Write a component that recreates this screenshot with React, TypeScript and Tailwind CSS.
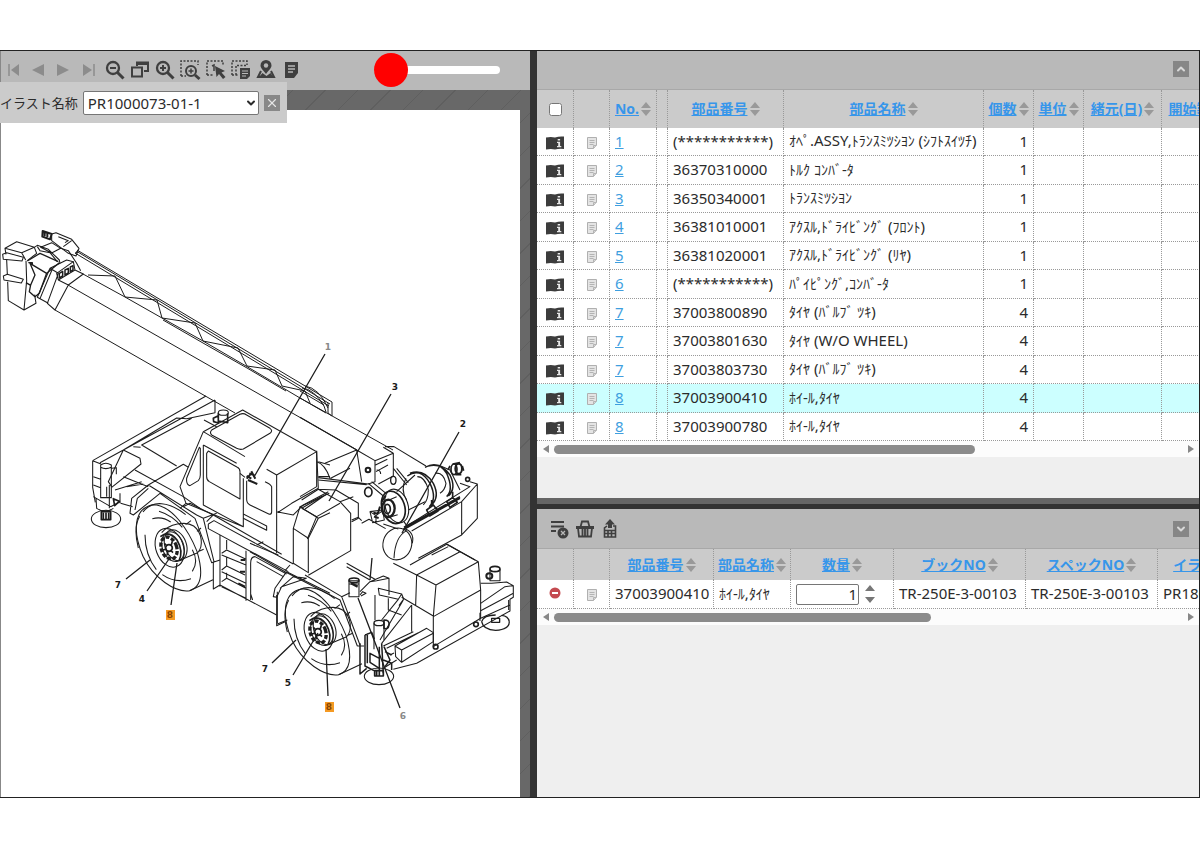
import React from 'react';
import { ChevronDown, ChevronUp, X } from 'lucide-react';

type Part = { no: string; code: string; name: string; qty: number; selected?: boolean };

const parts: Part[] = [
  { no: '1', code: '(***********)', name: 'ｵﾍﾟ.ASSY,ﾄﾗﾝｽﾐﾂｼﾖﾝ (ｼﾌﾄｽｲﾂﾁ)', qty: 1 },
  { no: '2', code: '36370310000', name: 'ﾄﾙｸ ｺﾝﾊﾞ-ﾀ', qty: 1 },
  { no: '3', code: '36350340001', name: 'ﾄﾗﾝｽﾐﾂｼﾖﾝ', qty: 1 },
  { no: '4', code: '36381010001', name: 'ｱｸｽﾙ,ﾄﾞﾗｲﾋﾞﾝｸﾞ (ﾌﾛﾝﾄ)', qty: 1 },
  { no: '5', code: '36381020001', name: 'ｱｸｽﾙ,ﾄﾞﾗｲﾋﾞﾝｸﾞ (ﾘﾔ)', qty: 1 },
  { no: '6', code: '(***********)', name: 'ﾊﾟｲﾋﾟﾝｸﾞ,ｺﾝﾊﾞ-ﾀ', qty: 1 },
  { no: '7', code: '37003800890', name: 'ﾀｲﾔ (ﾊﾞﾙﾌﾞ ﾂｷ)', qty: 4 },
  { no: '7', code: '37003801630', name: 'ﾀｲﾔ (W/O WHEEL)', qty: 4 },
  { no: '7', code: '37003803730', name: 'ﾀｲﾔ (ﾊﾞﾙﾌﾞ ﾂｷ)', qty: 4 },
  { no: '8', code: '37003900410', name: 'ﾎｲ-ﾙ,ﾀｲﾔ', qty: 4, selected: true },
  { no: '8', code: '37003900780', name: 'ﾎｲ-ﾙ,ﾀｲﾔ', qty: 4 },
];

/* Half-width kana are set smaller than the Latin letters beside them. */
function KanaText({ text }: { text: string }) {
  return (
    <>
      {text.split(/([\uff66-\uff9f]+)/).map((run, i) =>
        i % 2 ? (
          <span key={i} className="text-sm">{run}</span>
        ) : (
          run
        ),
      )}
    </>
  );
}

function SortMark() {
  return (
    <svg width="10" height="16" viewBox="0 0 10 16" className="shrink-0 fill-[#999]" aria-hidden="true">
      <path d="M5 1 10 7H0zM5 15 0 9h10z" />
    </svg>
  );
}

function SortHeader({ label }: { label: string }) {
  return (
    <div className="flex items-center justify-center gap-0.5 whitespace-nowrap">
      <a href="#sort" className="text-sm font-bold text-[#3796ea] underline">{label}</a>
      <SortMark />
    </div>
  );
}

function BookIcon() {
  return (
    <svg width="18" height="14" viewBox="0 0 18 14" aria-hidden="true">
      <path d="M0 1.500Q5 .5 9 1.500Q13 0 18 .5V13Q13 12.500 9 13.500Q5 12.500 0 13.500z" fill="#3c3c3c" />
      <path d="M11.700 3h2.400v1.600h-2.400zM11 5.800h3.100v4.200h1.200v1.200H11V10h1.200V7H11z" fill="#e8e8e8" />
    </svg>
  );
}

function NoteIcon() {
  return (
    <svg width="10" height="12" viewBox="0 0 10 12" aria-hidden="true">
      <path d="M.5.5h9v7.500l-3 3.500h-6z" fill="#e4e4e4" stroke="#b0b0b0" />
      <path d="M2.500 3.500h5M2.500 5.500h5M2.500 7.500h4M6.500 11.500V8.500h3" fill="none" stroke="#b4b4b4" />
    </svg>
  );
}

function CellIcon({ label, children }: { label: string; children: React.ReactNode }) {
  return (
    <button type="button" aria-label={label} className="flex w-full items-center justify-center pt-1">
      {children}
    </button>
  );
}

function ToolButton({ label, disabled, children }: { label: string; disabled?: boolean; children: React.ReactNode }) {
  return (
    <button type="button" aria-label={label} disabled={disabled} className="flex items-center justify-center text-[#3f3f3f] disabled:text-[#8c8c8c]">
      <svg width="22" height="22" viewBox="0 0 22 22" fill="none" stroke="currentColor" strokeWidth="2">{children}</svg>
    </button>
  );
}

function Toolbar() {
  return (
    <div className="grid w-[303px] shrink-0 grid-cols-12">
      <ToolButton label="最初" disabled><path d="M6 5v12" strokeWidth="1.500" /><path d="M16 5v12L8 11z" fill="currentColor" stroke="none" /></ToolButton>
      <ToolButton label="前へ" disabled><path d="M16 5v12L4 11z" fill="currentColor" stroke="none" /></ToolButton>
      <ToolButton label="次へ" disabled><path d="M4 5v12l12-6z" fill="currentColor" stroke="none" /></ToolButton>
      <ToolButton label="最後" disabled><path d="M16 5v12" strokeWidth="1.500" /><path d="M5 5v12l9-6z" fill="currentColor" stroke="none" /></ToolButton>
      <ToolButton label="縮小"><circle cx="9" cy="9" r="6" strokeWidth="2.300" /><path d="m13.500 13.500 6 6" strokeWidth="3" /><path d="M6 9h6" /></ToolButton>
      <ToolButton label="全体表示"><path d="M8 7V3.500h11V12h-4" /><path d="M8 4.500h11" strokeWidth="3" /><path d="M3 8.500h10v9H3z" /></ToolButton>
      <ToolButton label="拡大"><circle cx="9" cy="9" r="6" strokeWidth="2.300" /><path d="m13.500 13.500 6 6" strokeWidth="3" /><path d="M6 9h6M9 6v6" /></ToolButton>
      <ToolButton label="範囲拡大"><path d="M2 17V2h17v4M2 17h5" strokeWidth="1.500" strokeDasharray="2 1.500" /><circle cx="12" cy="12" r="5" /><path d="m16 16 4.500 4" strokeWidth="3" /><path d="M9.500 12h5M12 9.500v5" strokeWidth="1.500" /></ToolButton>
      <ToolButton label="番号選択"><path d="M2 16V2h16v4M2 16h7" strokeWidth="1.500" strokeDasharray="2 1.500" /><path d="M7 7l2-1v6" strokeWidth="1.500" /><path d="m10 7 10 5-3.500 1.500 4 4.500-2.500 2-4-5-2.500 3z" fill="currentColor" stroke="none" /></ToolButton>
      <ToolButton label="範囲選択"><path d="M2 16V2h15v4M2 16h6M6 16V6.500h10" strokeWidth="1.500" strokeDasharray="2 1.500" /><path d="M10 9h10v8l-3 3h-7z" fill="currentColor" stroke="none" /><path d="M12 12h6M12 14.500h6M12 17h4" stroke="#b8b8b8" strokeWidth="1" /></ToolButton>
      <ToolButton label="位置"><path d="M11 15C8 11 5.500 9 5.500 6.500a5.500 5.500 0 0 1 11 0C16.500 9 14 11 11 15z" fill="currentColor" stroke="none" /><circle cx="11" cy="6.500" r="2.200" fill="#b8b8b8" stroke="none" /><path d="m6 12-3 6h16l-3-6" /><path d="m4 18 3.500-4 4 3 4-3 3 4z" fill="currentColor" stroke="none" /></ToolButton>
      <ToolButton label="メモ"><path d="M5 3h13v11l-4 5H5z" fill="currentColor" stroke="none" /><path d="M8 7h7M8 10h7M8 13h5" stroke="#b8b8b8" strokeWidth="1.300" /></ToolButton>
    </div>
  );
}

function ScrollBar({ label, thumb }: { label: string; thumb: string }) {
  return (
    <div className="flex h-4 shrink-0 items-center bg-[#fcfcfc]">
      <button type="button" aria-label={label + ' 左へ'} className="flex w-[17px] justify-center">
        <svg width="6" height="8" viewBox="0 0 6 8" className="fill-[#888]"><path d="M6 0v8L0 4z" /></svg>
      </button>
      <div className="flex-1">
        <div className={'h-[9px] rounded-full bg-[#8b8b8b] ' + thumb} />
      </div>
      <button type="button" aria-label={label + ' 右へ'} className="flex w-[17px] justify-center">
        <svg width="6" height="8" viewBox="0 0 6 8" className="fill-[#888]"><path d="M0 0v8l6-4z" /></svg>
      </button>
    </div>
  );
}

function Wheel({ x, y }: { x: number; y: number }) {
  return (
    <g transform={`translate(${x} ${y}) scale(.3333)`} strokeWidth="3.200">
      <path d="M-48-130C-112-118-106-40-78 25C-48 90 20 135 62 128C102 115 102 70 84 10C60-50 10-130-48-130z" />
      <path d="M-78-108C-50-145 0-140 50-100M62 128L132 95M-88-95Q-108-60-92 0M-30-110Q10-98 40-62" />
      <path d="M-50-88Q-20-96 5-78M-72-40Q-72 20-38 65M-20 80Q20 108 66 92M70 70Q90 40 70 5" />
      <ellipse cx="2" cy="0" rx="41" ry="60" transform="rotate(-20)" />
      <path d="M-22-46C0-72 50-82 74-66C100-46 104-6 86 14L34 36M50-70L66-82M84-50L96-60M90 10L104 4" />
      <ellipse cx="12" cy="-4" rx="32" ry="46" transform="rotate(-20 12 -4)" />
      <ellipse cx="20" cy="-8" rx="32" ry="48" transform="rotate(-20 20 -8)" />
      <path d="M-26-34Q0-54 24-24Q44 10 30 38" strokeWidth="5" />
      <ellipse cx="0" cy="0" rx="23" ry="34" transform="rotate(-20)" strokeDasharray="12 5" strokeWidth="10" />
      <circle cx="0" cy="0" r="10" strokeWidth="5" />
      <path d="M-14-14l8 8M10-20l-4 14M12 14l-8-8M-6 22l3-14M-18 6l10-3" strokeWidth="5" />
    </g>
  );
}

function CraneDrawing() {
  return (
    <svg viewBox="1 110 519 687" preserveAspectRatio="xMinYMin meet" className="h-full w-full" fill="none" stroke="#1d1d1d" strokeWidth="1" strokeLinejoin="round" role="img" aria-label="クレーン全体図">
      {/* boom and jib lattice */}
      <path d="M77 250 332 402M75 253 329 406M77 251.500 330 404" />
      <path d="M83 274 125 297 162 318 203 341 246 366 300 398 326 413M163 320 203 343 247 368 286 391" />
      <path d="M88 275 115 276 125 297 157 300 162 318 195 323 203 341 238 348 247 366 275 370 282 386 305 391 310 403" />
      <path d="M68 285 357 450M55 310 235 413M300 398 393 450" />
      <path d="M302 388q12 1 22 18l2 6M305 386q14 2 23 22M332 402v14l-4-3v-10M300 391l24 14" />

      {/* boom head */}
      <g transform="translate(0 220) scale(.3333)" strokeWidth="3.200">
        <path d="M15 85 50 65 103 82 65 98zM15 85l3 18M20 120l2 43M23 185l2 57 47 28 36-20-4-26M65 98l12 22M78 122l2 60-8 88M103 82l7 18-28 22" />
        <path d="M8 103 20 98 70 112 66 123 10 118zM10 168 22 163 70 178 64 189 12 180z" />
        <path d="M82 123 120 100 175 125M90 130 140 160 118 220 105 230 88 215 92 195 105 165zM140 160 178 128M85 128h12v8M78 188l14 8" strokeWidth="4" />
        <path d="M150 145 112 232 145 250M157 147 120 236M150 145 175 160 142 250 165 270 205 195 175 180 170 160 220 125 225 150 175 180M150 145 200 120 220 125M205 195 250 162 225 150" />
        <path d="M178 160 188 154v14l-10 6zM195 150 205 145v14l-10 6zM211 141 219 137v13l-8 5z" strokeWidth="4.500" />
        <path d="M128 33 155 42 150 58 127 50zM134 35v14M142 38v14" strokeWidth="6" />
        <path d="M155 42 168 38 215 58 237 85 228 108 205 100 155 62zM175 50 205 62 195 68M190 80 215 62M237 88 226 100" />
        <path d="M103 82 112 76 145 88 178 120 180 130M112 80 120 92 150 98 172 125M122 82 155 68 182 85 155 99zM182 85 205 92 230 130 242 152" />
      </g>

      {/* chassis, cab and front outrigger */}
      <g transform="translate(80 390) scale(.3333)" strokeWidth="3.200">
        <path d="M378 18 38 212M405 30 60 218M405 30V68L320 86M372 90 410 110M38 212v80l8 45M38 212l25 10M335 85 185 165 290 228M320 86 290 84 130 180M130 180 180 205 183 222 95 292M130 180 85 275 95 290M160 170l22 2" />
        <ellipse cx="430" cy="68" rx="15" ry="8" /><path d="M415 68v25l28 5V70M400 85l15-8v22l-14-4z" strokeWidth="5" />
        <path d="M62 225q15-10 32 0v98h-32zM62 232q15 8 32 0M95 235l14-2v20M40 260l22 8M40 285l22 8M40 320 92 350 120 335M48 325 50 355Q75 372 100 355M80 290v30M88 285v70" />
        <path d="M100 326l18 8-14 13zM64 365h28v24H64zM70 368v20M78 368v22M86 368v20" strokeWidth="5" />
        <ellipse cx="78" cy="387" rx="44" ry="26" />
        <path d="M105 300 185 275M130 260 205 290M122 340 158 350M165 240 310 320 360 355M205 285 310 223 325 232M205 285 155 325 150 370 160 375 240 310M165 360 172 325 205 295M205 285 350 375M240 310 345 385 395 518 420 510M350 375 370 385 402 515M140 290 190 282M120 310v30" />
        <path d="M370 125 488 60 710 185 590 255M370 125 495 200M370 125 300 290 318 340 490 410M370 165 470 220M370 165V345L490 410V265M560 238 590 255V490M710 185l5 110-80 45-42 28M590 365l50 10 30-30 75-40" />
        <path d="M395 120 480 73Q490 68 500 75L570 115Q580 122 570 130L490 177Q480 180 470 175L395 135Q388 128 395 120zM385 183 472 232Q480 236 480 245V327L388 275Q380 270 380 260V190zM358 172 320 265Q318 285 330 287L355 272Q361 266 361 255V175z" />
        <path d="M500 272V328Q500 340 510 345L568 373Q575 373 575 365V290Q572 282 555 275M490 372 560 408V421L490 385M480 250 495 262" />
        <path d="M500 258l14 8M508 250l16 6M504 270l28 12M514 244l12 22M500 266l14-16" strokeWidth="6" />
        <path d="M310 350 330 340 400 375 380 395M370 385 410 370M385 402 402 392 640 522M385 402v14L625 545M318 340 300 355M400 375 605 493M530 465l20-10M640 415 660 350 715 385 685 445 640 415V520L685 548V445M660 350 748 310M715 385 750 368M715 215l35 10M715 260h35" />
        <path d="M420 435V590M400 515V597L420 585 590 675M498 482V632M425 490 440 480 498 508M425 495 498 525M425 540 440 528 495 555M425 545 498 580M425 575 440 565 498 595M440 450V478M440 500V528M440 548V565M425 590 498 625" />
        <path d="M480 545h15M475 580l20 10M482 510h14" strokeWidth="6" />
        <path d="M512 630V520Q512 500 525 500L620 552M530 515 610 560M592 700V605M512 612l6 18" />
        <path d="M620 545 585 595 580 620 590 622 605 590 680 565M600 595 640 560 680 565M620 545 750 610M592 702l30-12" />
      </g>

      {/* turntable, hood and winch */}
      <g transform="translate(300 340) scale(.3333)" strokeWidth="3.200">
        <path d="M50 365Q75 372 90 415M75 370 170 330 225 362V425L205 432 55 413M55 420 200 434M170 330 185 425M92 415 150 385M225 362 280 340V408L235 432M225 376 262 358M228 395 264 375M230 390q12 0 12 12M255 320 282 320 378 378M170 330 0 232M280 340 250 322" />
        <circle cx="204" cy="390" r="7" strokeWidth="6" /><ellipse cx="205" cy="456" rx="11" ry="14" strokeWidth="5" /><ellipse cx="280" cy="421" rx="8" ry="12" strokeWidth="4" />
        <path d="M205 430 250 468M215 425 258 460M280 385 320 435M290 385 325 428M210 515l38-5 5 30-35 8zM210 515l18 12 20-15M228 527v24M185 550l22-12 50 28M155 540l20-8 10 10" />
        <path d="M220 518l14 3M245 485l12-18M240 500l-6 20M222 530l14 4" strokeWidth="6" />
        <ellipse cx="280" cy="502" rx="34" ry="50" transform="rotate(-18 280 502)" strokeWidth="5" /><ellipse cx="290" cy="498" rx="34" ry="52" transform="rotate(-18 290 498)" />
        <ellipse cx="265" cy="505" rx="19" ry="26" strokeWidth="7" /><ellipse cx="262" cy="507" rx="9" ry="14" strokeWidth="5" />
        <path d="M262 482 290 470M268 532l25-8M290 455 345 405M325 510 375 485M312 545l10 15" />
        <path d="M322 408Q360 380 390 430Q412 475 388 500M330 400Q372 385 400 430Q420 470 395 495M375 382Q415 360 440 400Q462 450 440 470M385 378Q425 368 450 405Q470 445 445 468" strokeWidth="4.500" />
        <path d="M318 415Q300 450 320 480M352 410Q375 410 385 450Q385 480 370 495M405 400Q430 395 438 430Q435 450 420 460M415 375 450 390 480 450" />
        <ellipse cx="462" cy="388" rx="9" ry="16" strokeWidth="5" /><ellipse cx="476" cy="386" rx="10" ry="15" strokeWidth="6" /><path d="M458 372l22-4M466 404l18 0M487 378l4 14M450 378l-6 12" strokeWidth="5" />
        <path d="M380 510l20-15 14 18-25 15zM440 485l18-12 14 14-22 15zM395 480v20M458 455v20M312 562 400 515 480 470 M312 568 480 475" strokeWidth="5" />
        <circle cx="503" cy="418" r="6" strokeWidth="5" /><path d="M480 430 510 440 325 555M510 425 532 432V535L485 585 355 655M532 432 485 485V585M485 485 335 573M440 612 525 660M445 620 395 645" />
        <ellipse cx="292" cy="612" rx="43" ry="48" transform="rotate(15 292 612)" /><path d="M320 572Q285 590 282 655M310 565Q345 575 337 610M250 552l45 15" />
        <path d="M5 505 68 468M15 507 80 462 120 485 152 520V632L25 706M5 505 50 530 120 490M50 530 22 597M80 462 55 448 5 480M55 448 108 450 175 490V535L155 545M120 485 160 470M50 332V440M50 440 0 470" />
      </g>

      {/* rear body and outriggers */}
      <g transform="translate(250 540) scale(.3333)" strokeWidth="3.200">
        <path d="M0 10 85 45M0 35 105 95M105 95 270 180 322 318M165 105 275 170 330 315M290 70 375 118M290 80 360 120M322 318h20M105 92 120 75M275 170 300 158M80 165V257L105 245" />
        <path d="M297 122h30v48h-30zM297 132h30" /><ellipse cx="312" cy="121" rx="15" ry="7" strokeWidth="5" /><path d="M303 130l20 10" strokeWidth="7" />
        <path d="M330 155 360 125 400 108 417 115V165M360 125 380 122 417 115M330 165l8-10 10 5-15 8M375 165V240M385 145 455 162 445 178 388 165zM455 162l6 15-14 20M445 178 395 240M460 180 390 300M485 195 395 310M485 195V275M415 175v35l40 15" />
        <path d="M430 70 500 105 497 195M455 172 550 228M500 105 558 135 550 230 692 150 685 65 558 135M480 75 590 13 685 65M500 105 630 35M550 230V320L692 235V150" />
        <path d="M692 130H725L770 126 790 137V172L780 178V213L500 370 430 388M692 190 765 140 790 137M692 212 790 160M692 235 780 195" />
        <path d="M720 88v34h30V88" /><ellipse cx="735" cy="87" rx="15" ry="8" strokeWidth="5" /><ellipse cx="718" cy="108" rx="9" ry="8" strokeWidth="6" /><path d="M695 245Q700 225 737 225M778 245Q775 228 755 226M695 245Q700 270 737 271Q778 268 778 245M725 235h24v12h-24z" strokeWidth="4" />
        <circle cx="678" cy="253" r="7" strokeWidth="5" /><circle cx="557" cy="320" r="7" strokeWidth="5" /><path d="M690 218v25M776 180v30" />
        <path d="M435 318 530 265 550 278V305L455 367 437 350zM435 318 455 330 550 280M455 330V367M400 318 490 275M410 325 505 278M420 345l12-6M400 385 440 360" />
        <path d="M372 250v78M402 250v50" /><ellipse cx="387" cy="249" rx="15" ry="8" strokeWidth="4" /><path d="M402 240q18 0 15 15t-15 10z" strokeWidth="5" />
        <path d="M345 285V378L372 392M352 280V370M345 285l20-8 8 20M360 340l28 15v30l-28-18zM388 320v70M395 310l5 90M402 320l18 40-15 20M330 310V402L350 385M405 335l20 10M400 360l25 10v20" strokeWidth="4.500" />
        <path d="M374 392h26v16h-26zM380 392v18M388 392v18" strokeWidth="5" /><ellipse cx="387" cy="409" rx="44" ry="25" />
      </g>

      <Wheel x={169} y={548} />
      <Wheel x={318} y={632} />

      {/* callout leaders */}
      <path d="M325 354 254 477M391 394 329 501M459 432 402 533M126 579l24-19M147 591l22-32M171 605l6-42M272 663l24-23M293 675l25-42M328 696l-2-47M400 708 358 598M372 558l-2 22" strokeWidth="1.300" />

      <g fill="#f59a23" stroke="none">
        <rect x="166" y="610" width="9" height="10" /><rect x="325" y="702" width="9" height="10" />
      </g>
      <g stroke="none" fill="#1a1a1a" textAnchor="middle" className="font-['DejaVu_Sans',sans-serif] text-[9px] font-bold">
        <text x="328" y="350" fill="#888">1</text>
        <text x="395" y="390">3</text>
        <text x="463" y="427">2</text>
        <text x="118" y="588">7</text>
        <text x="142" y="602">4</text>
        <text x="170" y="618" fill="#8a4500">8</text>
        <text x="265" y="672">7</text>
        <text x="288" y="686">5</text>
        <text x="329" y="710" fill="#8a4500">8</text>
        <text x="403" y="719" fill="#888">6</text>
      </g>
    </svg>
  );
}

function IllustrationPane() {
  return (
    <section className="relative flex min-w-0 flex-[529] flex-col border-l border-[#888]">
      <div className="flex h-[39px] shrink-0 items-center bg-[#b9b9b9] pb-0.5">
        <Toolbar />
        <input
          type="range"
          aria-label="拡大率"
          defaultValue={0}
          className="ml-[70px] h-[34px] w-[126px] appearance-none bg-transparent [&::-webkit-slider-runnable-track]:h-2 [&::-webkit-slider-runnable-track]:rounded-full [&::-webkit-slider-runnable-track]:bg-white [&::-webkit-slider-thumb]:-mt-[13px] [&::-webkit-slider-thumb]:size-[34px] [&::-webkit-slider-thumb]:appearance-none [&::-webkit-slider-thumb]:rounded-full [&::-webkit-slider-thumb]:bg-[#ff0000]"
        />
      </div>
      <div className="min-h-0 flex-1 bg-[repeating-linear-gradient(135deg,#686868_0_22px,#5f5f5f_22px_23px)] pt-5 pr-2.5">
        <div className="h-full overflow-hidden bg-white">
          <CraneDrawing />
        </div>
      </div>
      <div className="absolute top-[31px] -left-px flex h-[41px] w-[287px] items-center gap-[5px] bg-[#cbcbcb]">
        <label htmlFor="illust" className="text-[13px] whitespace-nowrap">イラスト名称</label>
        <div className="relative">
          <select id="illust" className="block h-6 w-44 appearance-none rounded-xs border border-[#767676] bg-white pl-1 text-[15px] leading-5">
            <option>PR1000073-01-1</option>
          </select>
          <ChevronDown className="pointer-events-none absolute top-1.5 right-0.5 size-3" strokeWidth={4} />
        </div>
        <button type="button" aria-label="閉じる" className="flex size-4 items-center justify-center bg-[#888] text-[#e4e4e4]">
          <X className="size-3.5" />
        </button>
      </div>
    </section>
  );
}

const headCell = 'border-r border-dotted border-[#999] p-0';
const bodyCell = 'border-r border-b border-dotted border-[#999] p-0 pb-0.5';

function PartsTable() {
  return (
    <div className="overflow-hidden">
      <table className="w-[707px] table-fixed border-separate border-spacing-0 bg-white">
        <colgroup>
          <col className="w-[37px]" /><col className="w-[36px]" /><col className="w-[47px]" /><col className="w-[11px]" />
          <col className="w-[116px]" /><col className="w-[200px]" /><col className="w-[50px]" /><col className="w-[50px]" />
          <col className="w-[78px]" /><col className="w-[82px]" />
        </colgroup>
        <thead>
          <tr className="h-[38px] bg-[#cbcbcb]">
            <th className={headCell}><input type="checkbox" aria-label="すべて選択" className="mx-auto block size-[13px]" /></th>
            <th className={headCell} />
            <th className={headCell}><SortHeader label="No." /></th>
            <th className={headCell} />
            <th className={headCell}><SortHeader label="部品番号" /></th>
            <th className={headCell}><SortHeader label="部品名称" /></th>
            <th className={headCell}><SortHeader label="個数" /></th>
            <th className={headCell}><SortHeader label="単位" /></th>
            <th className={headCell}><SortHeader label="緒元(日)" /></th>
            <th className={headCell}><SortHeader label="開始製番" /></th>
          </tr>
        </thead>
        <tbody>
          {parts.map((p, i) => (
            <tr key={i} className={p.selected ? 'h-[29px] bg-[#ccffff]' : 'h-7 even:h-[29px]'}>
              <td className={bodyCell}><CellIcon label="部品情報"><BookIcon /></CellIcon></td>
              <td className={bodyCell}><CellIcon label="メモ"><NoteIcon /></CellIcon></td>
              <td className={bodyCell}><a href="#part" className="pl-[5px] text-[#3f9fdf] underline">{p.no}</a></td>
              <td className={bodyCell} />
              <td className={bodyCell}><div className="pl-[5px] whitespace-nowrap">{p.code}</div></td>
              <td className={bodyCell}><div className="pl-[5px] whitespace-nowrap"><KanaText text={p.name} /></div></td>
              <td className={bodyCell}><div className="pr-[5px] text-right">{p.qty}</div></td>
              <td className={bodyCell} /><td className={bodyCell} /><td className={bodyCell} />
            </tr>
          ))}
        </tbody>
      </table>
    </div>
  );
}

function OrderTable() {
  return (
    <div className="overflow-hidden">
      <table className="w-[720px] table-fixed border-separate border-spacing-0 bg-white">
        <colgroup>
          <col className="w-[37px]" /><col className="w-[36px]" /><col className="w-[104px]" /><col className="w-[77px]" />
          <col className="w-[103px]" /><col className="w-[132px]" /><col className="w-[132px]" /><col className="w-[99px]" />
        </colgroup>
        <thead>
          <tr className="h-[31px] bg-[#cbcbcb]">
            <th className={headCell} />
            <th className={headCell} />
            <th className={headCell}><SortHeader label="部品番号" /></th>
            <th className={headCell}><SortHeader label="部品名称" /></th>
            <th className={headCell}><SortHeader label="数量" /></th>
            <th className={headCell}><SortHeader label="ブックNO" /></th>
            <th className={headCell}><SortHeader label="スペックNO" /></th>
            <th className={headCell}><SortHeader label="イラスト" /></th>
          </tr>
        </thead>
        <tbody>
          <tr className="h-[29px]">
            <td className={bodyCell}>
              <button type="button" aria-label="削除" className="mx-auto block">
                <svg width="12" height="12" viewBox="0 0 12 12"><circle cx="6" cy="6" r="5.500" fill="#c44a50" /><path d="M3 6h6" stroke="#fff" strokeWidth="2" /></svg>
              </button>
            </td>
            <td className={bodyCell}><CellIcon label="メモ"><NoteIcon /></CellIcon></td>
            <td className={bodyCell}><div className="pl-[5px] whitespace-nowrap">37003900410</div></td>
            <td className={bodyCell}><div className="pl-[5px] whitespace-nowrap"><KanaText text="ﾎｲ-ﾙ,ﾀｲﾔ" /></div></td>
            <td className={bodyCell}>
              <div className="flex items-center gap-1.5 pt-0.5 pl-[5px]">
                <input type="text" aria-label="数量" defaultValue="1" className="h-[21px] w-[63px] rounded-xs border border-[#767676] bg-white pr-px text-right" />
                <svg width="10" height="18" viewBox="0 0 10 18" className="fill-[#777]" aria-hidden="true"><path d="M5 0 10 6H0zM5 18 0 12h10z" /></svg>
              </div>
            </td>
            <td className={bodyCell}><div className="pl-[5px] whitespace-nowrap">TR-250E-3-00103</div></td>
            <td className={bodyCell}><div className="pl-[5px] whitespace-nowrap">TR-250E-3-00103</div></td>
            <td className={bodyCell}><div className="pl-[5px] whitespace-nowrap">PR1800073</div></td>
          </tr>
        </tbody>
      </table>
    </div>
  );
}

const toggle = 'flex size-4 items-center justify-center bg-[#868686] text-[#d8d8d8]';

export default function App() {
  return (
    <div className="flex min-h-screen flex-col bg-white py-[50px] font-['Noto_Sans','Noto_Sans_CJK_JP',sans-serif] text-[15px] leading-5 text-[#2b2b2b]">
      <main className="flex flex-1 overflow-hidden border-y border-r border-[#222] bg-[#efefef]">
        <IllustrationPane />
        <div className="w-[7px] shrink-0 bg-[#333]" />
        <div className="flex min-w-0 flex-[662] flex-col">
          <section className="flex min-h-0 flex-[447] flex-col">
            <div className="flex h-[39px] shrink-0 items-center justify-end border-b border-[#a8a8a8] bg-[#b9b9b9] pr-2.5 pb-0.5">
              <button type="button" aria-label="折りたたむ" className={toggle}><ChevronUp className="size-3" strokeWidth={4} /></button>
            </div>
            <PartsTable />
            <ScrollBar label="部品一覧" thumb="w-[67%]" />
          </section>
          <div className="h-[11px] shrink-0 border-b-[5px] border-[#333] bg-[#666]" />
          <section className="flex min-h-0 flex-[288] flex-col">
            <div className="flex h-10 shrink-0 items-center gap-[3px] border-b border-[#a8a8a8] bg-[#b9b9b9] pr-2.5 pl-3">
              <ToolButton label="全削除"><path d="M2 4h13M2 8.500h13M2 13h5" /><circle cx="14" cy="15" r="5.500" fill="currentColor" stroke="none" /><path d="m12 13 4 4m0-4-4 4" stroke="#b8b8b8" strokeWidth="1.300" /></ToolButton>
              <ToolButton label="カート"><path d="M2 8h18v3H2z" fill="currentColor" stroke="none" /><path d="M6.500 9 8 3.500h6L15.500 9M4 10l1 8.500h12L18 10M8.500 11v8M11 11v8M13.500 11v8" strokeWidth="1.800" /></ToolButton>
              <ToolButton label="出力"><path d="m11 1 5 5.500h-3V10H9V6.500H6z" fill="currentColor" stroke="none" /><path d="M8 8 5.500 10v9h11V8H14M6 12.500h10M6 15.500h10M9 12.500v6M12.500 12.500v6" strokeWidth="1.600" /></ToolButton>
              <button type="button" aria-label="展開" className={'ml-auto ' + toggle}><ChevronDown className="size-3" strokeWidth={4} /></button>
            </div>
            <OrderTable />
            <ScrollBar label="注文一覧" thumb="w-[60%]" />
          </section>
        </div>
      </main>
    </div>
  );
}
